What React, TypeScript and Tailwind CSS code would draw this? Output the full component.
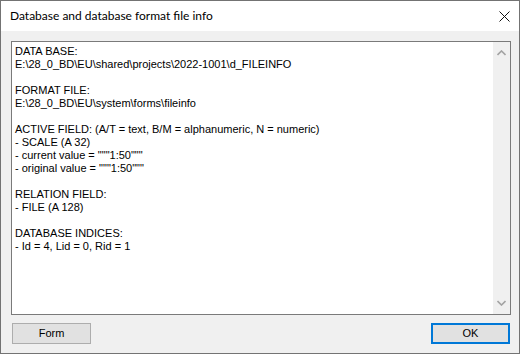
import React from 'react'

const lines = [
  'DATA BASE:',
  'E:\\28_0_BD\\EU\\shared\\projects\\2022-1001\\d_FILEINFO',
  '',
  'FORMAT FILE:',
  'E:\\28_0_BD\\EU\\system\\forms\\fileinfo',
  '',
  'ACTIVE FIELD: (A/T = text, B/M = alphanumeric, N = numeric)',
  '- SCALE (A 32)',
  '- current value = """1:50"""',
  '- original value = """1:50"""',
  '',
  'RELATION FIELD:',
  '- FILE (A 128)',
  '',
  'DATABASE INDICES:',
  '- Id = 4, Lid = 0, Rid = 1',
]

function Chevron({ up }: { up?: boolean }) {
  return (
    <svg width="9" height="6" viewBox="0 0 9 6" className="block">
      <path
        d={up ? 'M0.5 5 L4.5 1 L8.5 5' : 'M0.5 1 L4.5 5 L8.5 1'}
        fill="none"
        stroke="#a3a3a3"
        strokeWidth="1.6"
      />
    </svg>
  )
}

export default function App() {
  return (
    <div className="w-[520px] h-[354px] border border-[#737373] bg-[#f0f0f0] flex flex-col box-border">
      {/* title bar */}
      <div className="h-[30px] bg-white flex items-center justify-between pl-[9px] pr-[9px] shrink-0">
        <span className="text-[12px] text-black font-['Lato',sans-serif] leading-none">
          Database and database format file info
        </span>
        <svg width="11" height="11" viewBox="0 0 11 11" className="block">
          <path d="M0.5 0.5 L10.5 10.5 M10.5 0.5 L0.5 10.5" stroke="#111" strokeWidth="1" />
        </svg>
      </div>

      <div className="flex-1 flex flex-col pt-[10px] pl-[10px] pr-[8px]">
        {/* info box */}
        <div className="h-[274px] border border-[#7a7a7a] bg-white flex">
          <div className="flex-1 pl-[3px] pt-[3px] font-['Liberation_Sans',Arial,sans-serif] text-[11px] leading-[13px] text-black whitespace-pre">
            {lines.map((l, i) => (
              <div key={i} className="h-[13px]">{l}</div>
            ))}
          </div>
          <div className="w-[17px] bg-[#f0f0f0] flex flex-col justify-between items-center py-[8px]">
            <Chevron up />
            <Chevron />
          </div>
        </div>

        {/* buttons */}
        <div className="flex justify-between mt-[8px] pl-[1px] pr-[1px]">
          <button className="w-[79px] h-[21px] border border-[#adadad] bg-[#e1e1e1] text-[11px] text-black font-['Liberation_Sans',Arial,sans-serif] leading-none">
            Form
          </button>
          <button className="w-[79px] h-[21px] border-2 border-[#0078d7] bg-[#e1e1e1] text-[11px] text-black font-['Liberation_Sans',Arial,sans-serif] leading-none">
            OK
          </button>
        </div>
      </div>
    </div>
  )
}
